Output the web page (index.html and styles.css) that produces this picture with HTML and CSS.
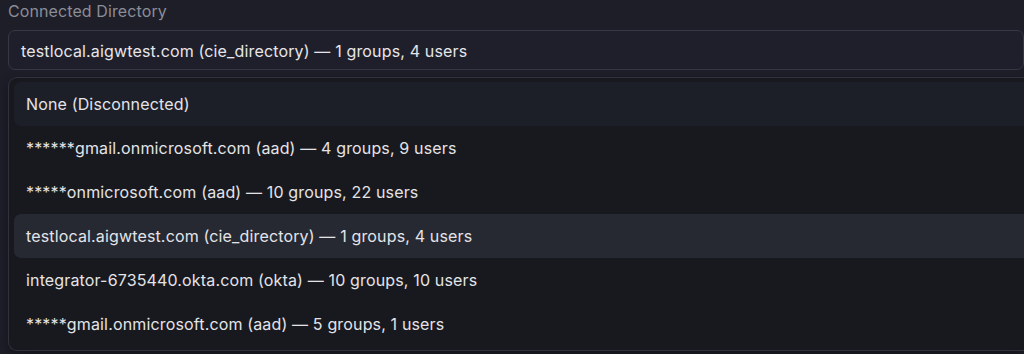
FILE: index.html
```html
<!DOCTYPE html>
<html lang="en">
<head>
    <meta charset="UTF-8">
    <meta name="viewport" content="width=device-width, initial-scale=1.0">
    <title>Connected Directory</title>
    <link rel="stylesheet" href="styles.css">
</head>
<body>
    <div class="field">
        <label class="field-label">Connected Directory</label>
        <div class="select">testlocal.aigwtest.com (cie_directory) — 1 groups, 4 users</div>

        <div class="dropdown">
            <div class="option first">None (Disconnected)</div>
            <div class="option">******gmail.onmicrosoft.com (aad) — 4 groups, 9 users</div>
            <div class="option">*****onmicrosoft.com (aad) — 10 groups, 22 users</div>
            <div class="option selected">testlocal.aigwtest.com (cie_directory) — 1 groups, 4 users</div>
            <div class="option">integrator-6735440.okta.com (okta) — 10 groups, 10 users</div>
            <div class="option">*****gmail.onmicrosoft.com (aad) — 5 groups, 1 users</div>
        </div>
    </div>
</body>
</html>
```

FILE: styles.css
```css
body {
    margin: 0;
    background-color: #1d1e28;
    color: #e4e4e8;
    font-family: Inter, "Noto Sans", sans-serif;
    font-size: 16px;
    letter-spacing: 0.15px;
    height: 354px;
    overflow: hidden;
}

.field {
    padding: 1px 0 0 8px;
}

.field-label {
    display: block;
    height: 20px;
    line-height: 20px;
    font-size: 16px;
    letter-spacing: 0.1px;
    color: #8b8d97;
}

.select {
    margin-top: 9px;
    height: 38px;
    line-height: 40px;
    padding: 0 12px;
    border: 1px solid #363845;
    border-radius: 7px;
    background-color: #1e1f2a;
    color: #e6e6ea;
}

.dropdown {
    margin-top: 7px;
    padding: 4px 0 4px 5px;
    border: 1px solid #30323d;
    border-right: none;
    border-radius: 9px 0 0 9px;
    background-color: #18191e;
    box-shadow: 0 4px 12px rgba(0, 0, 0, 0.35);
}

.option {
    height: 44px;
    line-height: 45px;
    padding-left: 12px;
    border-radius: 7px 0 0 7px;
    white-space: nowrap;
}

.option.first {
    background-color: #1d1f28;
}

.option.selected {
    background-color: #262932;
}
```
